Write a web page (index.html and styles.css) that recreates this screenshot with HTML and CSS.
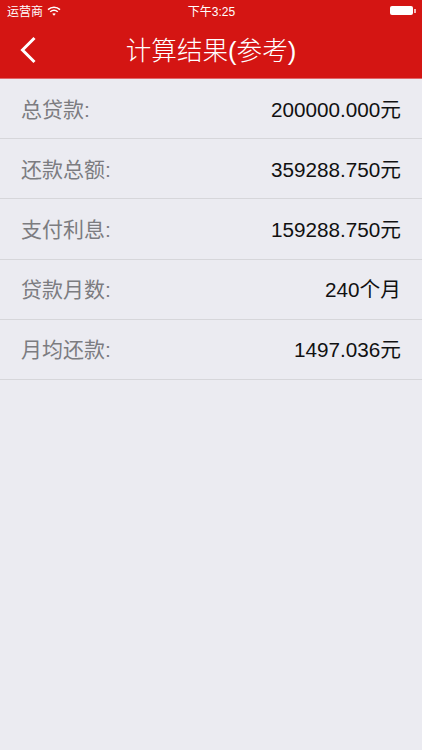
FILE: index.html
```html
<!DOCTYPE html>
<html lang="zh-CN">
<head>
<meta charset="UTF-8">
<meta name="viewport" content="width=device-width, initial-scale=1.0">
<title>计算结果(参考)</title>
<link rel="stylesheet" href="styles.css">
</head>
<body>

<!-- Red header with status bar -->
<div class="header">
  <div class="status-bar">
    <div class="status-left">
      <span>运营商</span>
      <svg class="wifi" width="14" height="10" viewBox="0 0 14 10">
        <path d="M1 3.6 C4.4 0.4 9.6 0.4 13 3.6" fill="none" stroke="#fff" stroke-width="1.5"/>
        <path d="M3.2 5.8 C5.4 3.9 8.6 3.9 10.8 5.8" fill="none" stroke="#fff" stroke-width="1.5"/>
        <path d="M5.2 7.8 L7 9.8 L8.8 7.8 C7.8 6.9 6.2 6.9 5.2 7.8 Z" fill="#fff"/>
      </svg>
    </div>
    <div class="status-time">下午3:25</div>
    <div class="battery">
      <div class="battery-body"></div>
      <div class="battery-tip"></div>
    </div>
  </div>
  <div class="nav-bar">
    <svg class="back" width="18" height="28" viewBox="0 0 18 28">
      <path d="M15.5 2 L3.5 14 L15.5 26" fill="none" stroke="#fff" stroke-width="3"/>
    </svg>
    <div class="nav-title">计算结果(参考)</div>
  </div>
</div>

<div class="result-list">
  <div class="row"><span class="label">总贷款:</span><span class="value">200000.000元</span></div>
  <div class="row"><span class="label">还款总额:</span><span class="value">359288.750元</span></div>
  <div class="row"><span class="label">支付利息:</span><span class="value">159288.750元</span></div>
  <div class="row"><span class="label">贷款月数:</span><span class="value">240个月</span></div>
  <div class="row"><span class="label">月均还款:</span><span class="value">1497.036元</span></div>
</div>

</body>
</html>
```

FILE: styles.css
```css
body {
  margin: 0;
  height: 750px;
  overflow: hidden;
  background: #ebebf1;
  font-family: "Liberation Sans", "Noto Sans CJK SC", sans-serif;
}

/* Header */
.header {
  background: #d41513;
  color: #fff;
  height: 78px;
  border-bottom: 1px solid #e0666a;
}

.status-bar {
  display: grid;
  grid-template-columns: 1fr auto 1fr;
  align-items: center;
  height: 21px;
  padding: 0 6px 0 7px;
  font-size: 12px;
}

.status-left {
  display: flex;
  align-items: center;
  gap: 4px;
}

.battery {
  display: flex;
  align-items: center;
  justify-content: flex-end;
}

.battery-body {
  width: 23px;
  height: 9px;
  background: #fff;
  border-radius: 2px;
}

.battery-tip {
  width: 2px;
  height: 4px;
  margin-left: 1px;
  background: #f3b9ba;
}

.nav-bar {
  display: flex;
  align-items: center;
  height: 55px;
  position: relative;
}

.back {
  position: absolute;
  left: 19px;
  top: 15px;
}

.nav-title {
  flex: 1;
  text-align: center;
  font-size: 25.6px;
  font-weight: 300;
}

/* Result rows */
.row {
  box-sizing: border-box;
  display: flex;
  justify-content: space-between;
  align-items: center;
  height: 60.2px;
  padding: 0 21px 2px;
  border-bottom: 1px solid #d6d6da;
}

.label {
  font-size: 21px;
  color: #7c7c80;
}

.value {
  font-size: 20.7px;
  color: #111;
}
```
